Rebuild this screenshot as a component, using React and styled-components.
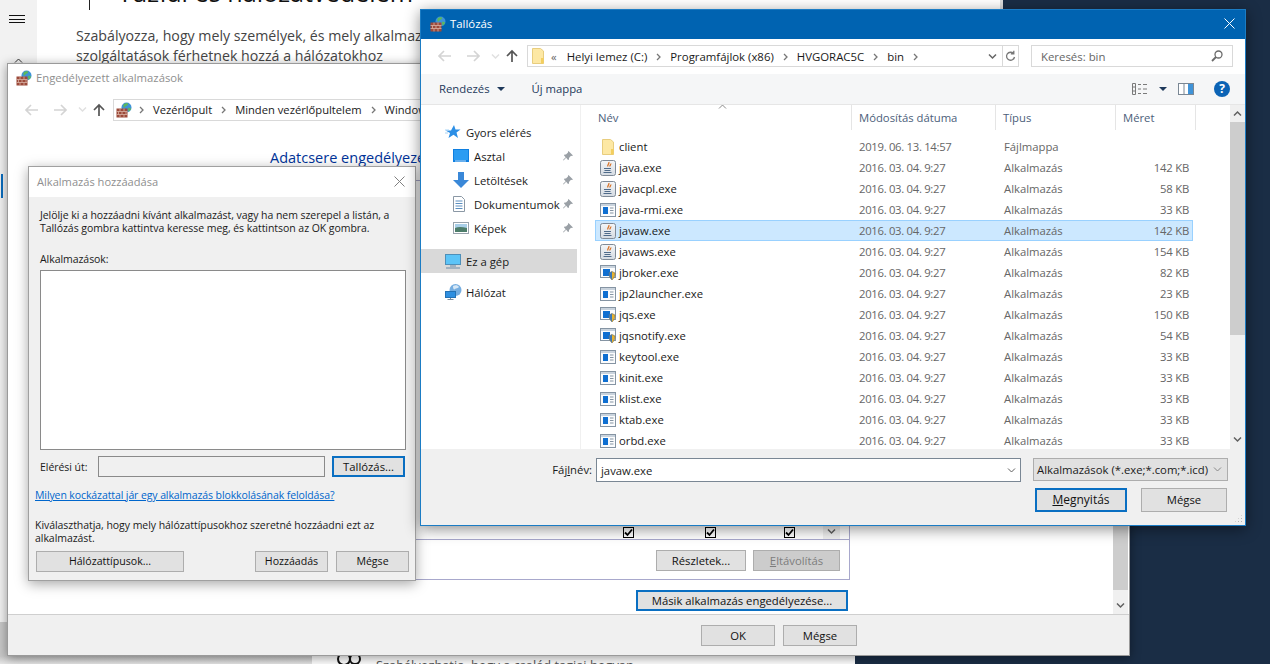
import React from "react";
import styled, { createGlobalStyle } from "styled-components";

const FONT = `"Open Sans", "Noto Sans", sans-serif`;

const files = [
  { name: "client", icon: "folder", date: "2019. 06. 13. 14:57", type: "Fájlmappa", size: "" },
  { name: "java.exe", icon: "java", size: "142 KB" },
  { name: "javacpl.exe", icon: "java", size: "58 KB" },
  { name: "java-rmi.exe", icon: "exe", size: "33 KB" },
  { name: "javaw.exe", icon: "java", size: "142 KB", selected: true },
  { name: "javaws.exe", icon: "java", size: "154 KB" },
  { name: "jbroker.exe", icon: "shield", size: "82 KB" },
  { name: "jp2launcher.exe", icon: "exe", size: "23 KB" },
  { name: "jqs.exe", icon: "shield", size: "150 KB" },
  { name: "jqsnotify.exe", icon: "shield", size: "54 KB" },
  { name: "keytool.exe", icon: "exe", size: "33 KB" },
  { name: "kinit.exe", icon: "exe", size: "33 KB" },
  { name: "klist.exe", icon: "exe", size: "33 KB" },
  { name: "ktab.exe", icon: "exe", size: "33 KB" },
  { name: "orbd.exe", icon: "exe", size: "33 KB" },
];

const FirewallIcon = () => (
  <svg width="16" height="16" viewBox="0 0 16 16">
    <circle cx="10.500" cy="5.500" r="5" fill="#3f93d8" />
    <path d="M7.500 2.500c1.500-1.500 3.500-1.500 4.500-1 .5 1.500-1 2-2 2.500s-1.500 2-2.500 1.500z" fill="#5cb85c" />
    <path d="M12 6c1.500-.5 2.500 0 3 .5-.5 2-1.500 3-2.500 3z" fill="#5cb85c" />
    <rect x="0.500" y="6.500" width="11" height="9" fill="#9c4a3a" />
    <path d="M.5 9.500h11M.5 12.500h11M4 6.500v3M8 6.500v3M2.500 9.500v3M6 9.500v3M10 9.500v3M4 12.500v3M8 12.500v3" stroke="#d9b3a5" strokeWidth="0.800" fill="none" />
  </svg>
);

const FolderIcon = () => (
  <svg width="12" height="16" viewBox="0 0 12 16">
    <path d="M.5.5h8l3 2.500v12.500H.5z" fill="#fde8a4" stroke="#e8cd7e" />
    <path d="M9 10h2.500v5.500H9z" fill="#f4cf5e" />
  </svg>
);

const JavaIcon = () => (
  <svg width="16" height="16" viewBox="0 0 16 16">
    <defs>
      <linearGradient id="javaFill" x1="0" y1="0" x2="0" y2="1">
        <stop offset="0" stopColor="#f4f6f8" />
        <stop offset="1" stopColor="#d5dbe2" />
      </linearGradient>
    </defs>
    <rect x="0.500" y="0.500" width="15" height="15" rx="2" fill="url(#javaFill)" stroke="#7f8a97" />
    <path d="M8.800 2c1 1.700-1.800 2.500-.9 4.500M10.800 3.500c.3 1-1.300 1.800-.8 3" stroke="#d9752b" strokeWidth="1.300" fill="none" />
    <path d="M4 8.500h7M4.500 10.500h6M3.500 12.500h8" stroke="#4f6b8a" strokeWidth="1" fill="none" />
  </svg>
);

const ExeIcon = () => (
  <svg width="16" height="14" viewBox="0 0 16 14">
    <rect x="0.500" y="0.500" width="15" height="13" fill="#fbfcfd" stroke="#8594a3" />
    <rect x="1" y="1" width="14" height="2" fill="#c9d3dd" />
    <rect x="3" y="4" width="5" height="7" fill="#0f6fd1" />
    <path d="M10 5h3.500M10 7.500h3.500M10 10h3.500" stroke="#8594a3" fill="none" />
  </svg>
);

const ShieldExeIcon = () => (
  <svg width="16" height="16" viewBox="0 0 16 16">
    <rect x="0.500" y="0.500" width="15" height="12" fill="#fbfcfd" stroke="#8594a3" />
    <rect x="1" y="1" width="14" height="2" fill="#c9d3dd" />
    <rect x="3" y="4" width="7" height="7" fill="#0f6fd1" />
    <path d="M9 8l3-1.500 3 1.500c0 3-1 5-3 7-2-2-3-4-3-7z" fill="#e8b32e" stroke="#6d6a55" strokeWidth="0.600" />
    <path d="M12 6.500v8.300c-2-2-3-3.800-3-6.800z" fill="#3c77b8" />
  </svg>
);

const fileIcons = {
  folder: <FolderIcon />,
  java: <JavaIcon />,
  exe: <ExeIcon />,
  shield: <ShieldExeIcon />,
};

const StarIcon = () => (
  <svg width="16" height="14" viewBox="0 0 16 14">
    <path d="M9 0l1.500 4.500H15.500l-4 3 1.500 5.500-4.500-3.200L3.500 13 5 8 .5 5.500H6z" fill="#2c8fe6" />
    <path d="M0 5h4M0 8h3" stroke="#a8d4f7" strokeWidth="1" />
  </svg>
);

const DesktopIcon = () => (
  <svg width="16" height="14" viewBox="0 0 16 14">
    <rect x="0" y="0" width="16" height="13" fill="#0f7fe0" />
    <rect x="1" y="1" width="14" height="10" fill="#2b9cf2" />
    <rect x="2" y="11.500" width="11" height="1" fill="#bfe0fa" />
  </svg>
);

const DownloadIcon = () => (
  <svg width="16" height="16" viewBox="0 0 16 16">
    <path d="M5 0h6v8h5l-8 8-8-8h5z" fill="#3a88d8" />
  </svg>
);

const DocIcon = () => (
  <svg width="12" height="16" viewBox="0 0 12 16">
    <path d="M.5.5h8l3 3v12H.5z" fill="#fff" stroke="#8b98a5" />
    <path d="M2.500 5h7M2.500 7.500h7M2.500 10h7M2.500 12.500h7" stroke="#5c8fc0" fill="none" />
  </svg>
);

const PictureIcon = () => (
  <svg width="16" height="12" viewBox="0 0 16 12">
    <rect x="0.500" y="0.500" width="15" height="11" fill="#fff" stroke="#98a3ad" />
    <rect x="2" y="2" width="12" height="4" fill="#a9cfe8" />
    <path d="M2 6c3-1.500 7-1.500 12 0v4H2z" fill="#4d7d6a" />
  </svg>
);

const PcIcon = () => (
  <svg width="16" height="15" viewBox="0 0 16 15">
    <rect x="0.500" y="0.500" width="15" height="10" fill="#5cc4f7" stroke="#4e8fb8" />
    <path d="M5 12h6M1 14h14" stroke="#8fa5b8" strokeWidth="1.400" />
  </svg>
);

const NetworkIcon = () => (
  <svg width="17" height="16" viewBox="0 0 17 16">
    <circle cx="10.500" cy="6" r="6" fill="#76aee0" />
    <path d="M8 2c2-1.500 5-1 6 1-1 1.500-3 1-4 2s-2 0-2-3z" fill="#d7e8f6" />
    <rect x="0.500" y="7.500" width="10" height="6" fill="#2e8fe0" stroke="#2472b5" />
    <path d="M5.500 14v2M2.500 15.500h6" stroke="#7f8f9f" />
  </svg>
);

const PinIcon = () => (
  <svg width="10" height="10" viewBox="0 0 10 10">
    <path d="M5.500 0l4.500 4.500-1.200.6-.8-.3L6 7 6 8.500 5 9 3.200 6.800.5 9.500 0 9l2.700-2.800L1 4.500l.5-1L3 3.500 5 1.500 5 .8z" fill="#9aa0a6" />
  </svg>
);

const ChevronSvg = ({ dir = "down", color = "#606060", w = 1.5 }) => (
  <svg width="9" height="7" viewBox="0 0 9 7">
    <path d={dir === "down" ? "M1 1.500l3.500 3.500L8 1.500" : "M1 5.500L4.500 2 8 5.500"} stroke={color} strokeWidth={w} fill="none" />
  </svg>
);

const ArrowSvg = ({ dir, color }) => {
  const paths = {
    left: "M14 7H2M7 2L2 7l5 5",
    right: "M0 7h12M7 2l5 5-5 5",
    up: "M7 13V2M2 7l5-5 5 5",
  };
  return (
    <svg width="14" height="14" viewBox="0 0 14 14">
      <path d={paths[dir]} stroke={color} strokeWidth="1.700" fill="none" />
    </svg>
  );
};

const CloseSvg = ({ color }) => (
  <svg width="11" height="11" viewBox="0 0 11 11">
    <path d="M.5.5l10 10M10.500.5l-10 10" stroke={color} strokeWidth="1" fill="none" />
  </svg>
);

const SmallArrow = () => (
  <svg width="5" height="8" viewBox="0 0 5 8">
    <path d="M1 1l3 3-3 3" stroke="#777" strokeWidth="1.300" fill="none" />
  </svg>
);

const CheckSvg = () => (
  <svg width="9" height="9" viewBox="0 0 9 9">
    <path d="M1 4.500l2.500 2.500L8 1.500" stroke="#000" strokeWidth="1.800" fill="none" />
  </svg>
);

const GlobalStyle = createGlobalStyle`
  * { box-sizing: border-box; }
  html, body { margin: 0; padding: 0; }
  body { background: #1b2d45; font-family: ${FONT}; overflow: hidden; }
  #root { width: 1270px; height: 664px; }
`;

const Desktop = styled.div`
  position: relative;
  width: 1270px;
  height: 664px;
  overflow: hidden;
  background: #1a2d45;
`;

/* legmélyebb ablak: Beállítások */
const SettingsWindow = styled.section`
  position: absolute;
  left: 0;
  top: 0;
  width: 1003px;
  height: 622px;
  display: flex;
  background: #fff;
  border-right: 3px solid #dcdcdc;
  overflow: hidden;
`;

const Rail = styled.nav`
  width: 37px;
  background: #f2f2f2;
  display: flex;
  flex-direction: column;
  align-items: flex-start;
`;

const Hamburger = styled.div`
  margin: 15px 0 0 9px;
  width: 16px;
  height: 8px;
  border-top: 1px solid #111;
  border-bottom: 1px solid #111;
  position: relative;
  &::after {
    content: "";
    position: absolute;
    left: 0;
    right: 0;
    top: 2.500px;
    height: 1px;
    background: #111;
  }
`;

const RailChevron = styled.span`
  margin: 34px 0 0 14px;
  height: 7px;
  display: flex;
`;

const RailAccent = styled.div`
  margin: 110px 0 0 1px;
  width: 2px;
  height: 24px;
  background: #0a6cbd;
`;

const SettingsBody = styled.div`
  padding-left: 39px;
  color: #333;
`;

const SettingsHeading = styled.h1`
  margin: -27px 0 0;
  display: flex;
  align-items: center;
  gap: 28px;
  font-size: 25.200px;
  font-weight: 400;
  line-height: 38px;
  color: #111;
  white-space: nowrap;
  &::before {
    content: "";
    flex: none;
    width: 1px;
    height: 36px;
    margin-left: 13px;
    background: #222;
  }
`;

const SettingsText = styled.p`
  margin: 15px 0 0;
  font-size: 14.200px;
  line-height: 20px;
  color: #444;
  white-space: nowrap;
`;

const FamilyWindow = styled.section`
  position: absolute;
  left: 312px;
  top: 622px;
  width: 543px;
  height: 42px;
  background: #fff;
  display: flex;
  align-items: flex-end;
  gap: 14px;
  padding-left: 24px;
  font-size: 12.800px;
  color: #555;
  white-space: nowrap;
  overflow: hidden;
`;

const FamilyText = styled.span`
  margin-bottom: -10px;
`;

const FamilyGlyph = styled.svg`
  margin-bottom: -7px;
`;

const LeftBackdrop = styled.div`
  position: absolute;
  left: 0;
  top: 622px;
  width: 312px;
  height: 42px;
  background: linear-gradient(#c8c8c8, #c8c8c8 34px, #e6e6e6);
`;

/* Engedélyezett alkalmazások */
const PermitWindow = styled.section`
  position: absolute;
  left: 7px;
  top: 63px;
  width: 1123px;
  height: 593px;
  display: flex;
  flex-direction: column;
  background: #fff;
  border: 1px solid #9a9a9a;
  box-shadow: 0 2px 10px rgba(0, 0, 0, 0.4);
`;

const InactiveTitle = styled.header`
  height: 29px;
  flex: none;
  display: flex;
  align-items: center;
  gap: 4px;
  padding: 0 0 2px 8px;
  font-size: 11.300px;
  color: #8f8f8f;
`;

const NavRow = styled.div`
  height: ${(p) => p.$h}px;
  flex: none;
  display: flex;
  align-items: center;
  padding: 0 0 1px ${(p) => p.$pad}px;
`;

const NavButtons = styled.div`
  display: flex;
  align-items: center;
  width: ${(p) => p.$w}px;
  flex: none;
`;

const NavSlot = styled.span`
  display: flex;
  width: ${(p) => p.$w}px;
  justify-content: center;
`;

const Breadcrumb = styled.div`
  height: 22px;
  flex: none;
  width: ${(p) => p.$w}px;
  display: flex;
  align-items: center;
  border: 1px solid #d9d9d9;
  background: #fff;
  font-size: ${(p) => p.$fs}px;
  color: #1a1a1a;
  white-space: nowrap;
  overflow: hidden;
  padding-left: ${(p) => p.$pad}px;
`;

const Crumb = styled.span`
  margin: 0 ${(p) => p.$r || 9}px 0 ${(p) => p.$l || 9}px;
  color: #666;
`;

const CrumbEnd = styled.span`
  margin-left: auto;
  height: 100%;
  display: flex;
  align-items: center;
`;

const RefreshBox = styled.span`
  width: 16px;
  height: 100%;
  margin-left: 5px;
  border-left: 1px solid #d9d9d9;
  display: flex;
  align-items: center;
  justify-content: center;
`;

const PermitContent = styled.div`
  flex: 1;
  min-height: 0;
  display: flex;
`;

const PermitMain = styled.div`
  flex: 1;
  padding: 20px 263px 0 42px;
`;

const PermitHeading = styled.h2`
  margin: 0 0 0 220px;
  font-size: 14.500px;
  line-height: 22px;
  font-weight: 400;
  color: #003399;
  white-space: nowrap;
`;

const GroupBox = styled.div`
  margin-top: 11px;
  height: 400px;
  display: flex;
  flex-direction: column;
  border: 1px solid #a8a8cc;
  padding: 0 9px 8px 0;
`;

const AppTable = styled.div`
  flex: 1;
  display: flex;
  align-items: flex-end;
  justify-content: flex-end;
  border-bottom: 1px solid #a8a8cc;
  margin-right: -9px;
`;

const CheckCell = styled.span`
  width: 11px;
  height: 11px;
  margin-left: ${(p) => p.$gap}px;
  margin-bottom: 1px;
  border: 1px solid #000;
  background: #fff;
  display: flex;
  align-items: center;
  justify-content: center;
`;

const TableScroll = styled.span`
  width: 17px;
  height: 16px;
  margin-left: 28px;
  margin-right: 9px;
  background: #f0f0f0;
  display: flex;
  align-items: center;
  justify-content: center;
`;

const ButtonRow = styled.div`
  margin-top: ${(p) => p.$top || 0}px;
  padding-right: ${(p) => p.$right || 0}px;
  display: flex;
  justify-content: flex-end;
  gap: ${(p) => p.$gap || 0}px;
`;

const Button = styled.button`
  width: ${(p) => p.$w}px;
  height: ${(p) => p.$h || 21}px;
  padding: 0;
  background: ${(p) => (p.disabled ? "#cccccc" : "#e1e1e1")};
  border: ${(p) => (p.$focus ? "2px solid #0a6fc2" : "1px solid #adadad")};
  color: ${(p) => (p.disabled ? "#7d7d7d" : "#111")};
  font-family: ${FONT};
  font-size: ${(p) => p.$fs || 11.3}px;
  line-height: 1;
  white-space: nowrap;
`;

const PageScroll = styled.div`
  width: 15px;
  flex: none;
  margin-right: 1px;
  display: flex;
  flex-direction: column;
  justify-content: space-between;
  align-items: center;
  background: #f0f0f0;
  padding-bottom: 5px;
`;

const ScrollThumb = styled.div`
  width: 100%;
  height: ${(p) => p.$h}px;
  flex: none;
  background: #cdcdcd;
`;

const PermitFooter = styled.footer`
  height: 41px;
  flex: none;
  display: flex;
  justify-content: flex-end;
  gap: 8px;
  padding: 10px 272px 0 0;
  background: #f0f0f0;
  border-top: 1px solid #cfcfcf;
`;

/* Alkalmazás hozzáadása */
const AddDialog = styled.section`
  position: absolute;
  left: 28px;
  top: 166px;
  width: 388px;
  height: 415px;
  display: flex;
  flex-direction: column;
  background: #f0f0f0;
  border: 1px solid #a0a0a0;
  box-shadow: 0 3px 12px rgba(0, 0, 0, 0.35);
`;

const DialogTitle = styled.header`
  height: 30px;
  flex: none;
  display: flex;
  align-items: center;
  justify-content: space-between;
  padding: 0 10px 2px 8px;
  background: #fff;
  font-size: 11.100px;
  color: #8f8f8f;
`;

const DialogBody = styled.div`
  flex: 1;
  padding: 12px 0 0 11px;
  display: flex;
  flex-direction: column;
  align-items: flex-start;
  font-size: 10.500px;
  letter-spacing: -0.050px;
  color: #1a1a1a;
`;

const DialogText = styled.p`
  margin: ${(p) => p.$top || 0}px 0 0 ${(p) => p.$left || 0}px;
  line-height: 13px;
  white-space: nowrap;
`;

const DialogLabel = styled.label`
  margin-top: 17px;
  line-height: 14px;
`;

const AppsList = styled.div`
  margin-top: 4px;
  width: 366px;
  height: 180px;
  background: #fff;
  border: 1px solid #8a8a8a;
`;

const PathRow = styled.div`
  margin-top: 6px;
  width: 366px;
  display: flex;
  align-items: center;
  gap: 7px;
`;

const PathLabel = styled.span`
  width: 51px;
  flex: none;
  white-space: nowrap;
`;

const PathInput = styled.div`
  width: 227px;
  height: 21px;
  background: #f0f0f0;
  border: 1px solid #8a8a8a;
`;

const DialogLink = styled.a`
  margin: 11px 0 0 -5px;
  line-height: 14px;
  letter-spacing: -0.100px;
  color: #0066cc;
  text-decoration: underline;
  white-space: nowrap;
`;

const DialogButtons = styled.div`
  margin: 6px 0 0 -4px;
  width: 373px;
  display: flex;
  gap: 8px;
  & > :first-child {
    margin-right: auto;
  }
`;

/* Tallózás */
const BrowseWindow = styled.section`
  position: absolute;
  left: 420px;
  top: 9px;
  width: 826px;
  height: 517px;
  display: flex;
  flex-direction: column;
  background: #fff;
  border: 1px solid #1b7cc4;
  box-shadow: 0 3px 14px rgba(0, 0, 0, 0.45);
`;

const BrowseTitle = styled.header`
  height: 29px;
  flex: none;
  display: flex;
  align-items: center;
  gap: 4px;
  padding: 0 10px 2px 9px;
  background: #0063b1;
  color: #fff;
  font-size: 11.400px;
`;

const TitleClose = styled.span`
  margin-left: auto;
  display: flex;
`;

const SearchBox = styled.div`
  width: 202px;
  height: 22px;
  margin-left: 12px;
  flex: none;
  display: flex;
  align-items: center;
  justify-content: space-between;
  padding: 0 9px;
  border: 1px solid #d9d9d9;
  font-size: 11.400px;
  color: #666;
`;

const Toolbar = styled.div`
  height: 31px;
  flex: none;
  display: flex;
  align-items: center;
  padding: 0 15px 1px 18px;
  background: #f5f6f7;
  border-bottom: 1px solid #e6e6e6;
  font-size: 11.300px;
  color: #1e395b;
`;

const ToolButton = styled.span`
  display: flex;
  align-items: center;
  gap: 7px;
  margin-right: ${(p) => p.$right || 0}px;
`;

const DownTriangle = styled.i`
  width: 0;
  height: 0;
  border-left: 4px solid transparent;
  border-right: 4px solid transparent;
  border-top: 4px solid #1e395b;
`;

const ToolIcons = styled.span`
  margin-left: auto;
  display: flex;
  align-items: center;
`;

const HelpBadge = styled.span`
  width: 16px;
  height: 16px;
  margin-left: 20px;
  border-radius: 50%;
  background: #0b63b5;
  color: #fff;
  font-size: 12px;
  font-weight: 700;
  line-height: 16px;
  text-align: center;
`;

const BrowseMain = styled.div`
  flex: 1;
  min-height: 0;
  display: flex;
`;

const NavPane = styled.aside`
  width: 160px;
  flex: none;
  padding-top: 15px;
  border-right: 1px solid #f0f0f0;
  font-size: 11.300px;
  color: #1a1a1a;
`;

const NavItem = styled.div`
  height: 24px;
  width: 156px;
  margin-top: ${(p) => p.$top || 0}px;
  display: flex;
  align-items: center;
  padding-left: ${(p) => (p.$sub ? 32 : 24)}px;
  background: ${(p) => (p.$active ? "#d9d9d9" : "transparent")};
  white-space: nowrap;
`;

const NavIconSlot = styled.span`
  width: 21px;
  flex: none;
  display: flex;
  align-items: center;
`;

const NavPin = styled.span`
  margin-left: auto;
  margin-right: 4px;
  display: flex;
`;

const ListPane = styled.div`
  flex: 1;
  min-width: 0;
  overflow: hidden;
`;

const ListHeader = styled.div`
  height: 25px;
  margin-bottom: 6px;
  display: grid;
  grid-template-columns: 271px 144px 120px 80px;
  font-size: 11.300px;
  color: #4c607a;
`;

const HeaderCell = styled.div`
  position: relative;
  padding: 5px 0 0 ${(p) => p.$pad}px;
  border-right: 1px solid #e5e5e5;
`;

const SortMark = styled.span`
  position: absolute;
  left: 137px;
  top: -2px;
  display: flex;
`;

const FileRow = styled.div`
  width: 598px;
  height: 21px;
  margin-left: 14px;
  display: grid;
  grid-template-columns: 257px 144px 120px 75px;
  align-items: center;
  border: 1px solid ${(p) => (p.$selected ? "#99d1ff" : "transparent")};
  background: ${(p) => (p.$selected ? "#cce8ff" : "transparent")};
  font-size: 11.300px;
  color: #666;
  white-space: nowrap;
`;

const FileName = styled.span`
  display: flex;
  align-items: center;
  gap: 3px;
  padding-left: 4px;
  color: #1a1a1a;
`;

const FileIconSlot = styled.span`
  width: 16px;
  height: 16px;
  display: flex;
  align-items: center;
  justify-content: center;
`;

const FileDate = styled.span`
  padding-left: 6px;
  letter-spacing: -0.300px;
`;

const FileCell = styled.span`
  padding-left: 7px;
`;

const FileSize = styled.span`
  text-align: right;
  padding-right: 3px;
  letter-spacing: -0.200px;
`;

const BrowseScroll = styled.div`
  width: 15px;
  flex: none;
  display: flex;
  flex-direction: column;
  align-items: center;
  background: #f0f0f0;
`;

const ScrollCap = styled.span`
  height: ${(p) => p.$h}px;
  flex: none;
  display: flex;
  align-items: ${(p) => (p.$end ? "flex-end" : "center")};
  padding-bottom: ${(p) => (p.$end ? 6 : 0)}px;
`;

const BrowseBottom = styled.div`
  height: 76px;
  flex: none;
  position: relative;
  background: #f0f0f0;
  padding: 9px 17px 0 0;
  font-size: 11.300px;
  color: #1a1a1a;
`;

const BottomRow = styled.div`
  display: flex;
  justify-content: flex-end;
  align-items: flex-start;
`;

const NameLabel = styled.label`
  margin: 4px 4px 0 0;
`;

const NameInput = styled.div`
  width: 425px;
  height: 24px;
  display: flex;
  align-items: center;
  justify-content: space-between;
  padding: 0 4px;
  background: #fff;
  border: 1px solid #7a8794;
`;

const TypeSelect = styled.div`
  width: 195px;
  height: 23px;
  margin-left: 12px;
  display: flex;
  align-items: center;
  justify-content: space-between;
  padding: 0 5px 0 3px;
  background: #e1e1e1;
  border: 1px solid #adadad;
  white-space: nowrap;
`;

const BrowseButtons = styled.div`
  margin: 6px 1px 0 0;
  display: flex;
  justify-content: flex-end;
  gap: 14px;
`;

const Grip = styled.span`
  position: absolute;
  right: 2px;
  bottom: 2px;
  width: 9px;
  height: 9px;
  background-image: radial-gradient(#b5b5b5 1px, transparent 1px);
  background-size: 3px 3px;
  clip-path: polygon(100% 0, 100% 100%, 0 100%);
`;

const ViewIcon = () => (
  <svg width="16" height="12" viewBox="0 0 16 12">
    <path d="M.5.5h3v11h-3zM.5 4h3M.5 8h3M6 1.500h3M11 1.500h4M6 6h3M11 6h4M6 10.500h3M11 10.500h4" stroke="#7a7a7a" fill="none" />
  </svg>
);

const PaneIcon = () => (
  <svg width="16" height="12" viewBox="0 0 16 12">
    <rect x="0.500" y="0.500" width="15" height="11" fill="#fff" stroke="#7a8794" />
    <rect x="10" y="1" width="5" height="10" fill="#3f93d8" />
    <path d="M6 1v10" stroke="#7a8794" />
  </svg>
);

const SearchGlyph = () => (
  <svg width="12" height="12" viewBox="0 0 12 12">
    <circle cx="7.500" cy="4.500" r="3.500" stroke="#6a6a6a" strokeWidth="1.300" fill="none" />
    <path d="M5 7l-4 4" stroke="#6a6a6a" strokeWidth="1.800" />
  </svg>
);

const RefreshGlyph = () => (
  <svg width="11" height="12" viewBox="0 0 11 12">
    <path d="M8.500 3.500A4 4 0 1 0 9.500 7M8.800 .8v3H5.800" stroke="#777" strokeWidth="1.300" fill="none" />
  </svg>
);

const FamilySvg = () => (
  <FamilyGlyph width="26" height="20" viewBox="0 0 26 20">
    <circle cx="8" cy="8" r="6" stroke="#111" strokeWidth="2" fill="none" />
    <circle cx="19" cy="8" r="5" stroke="#111" strokeWidth="2" fill="none" />
    <circle cx="13" cy="2" r="1.500" fill="#111" />
  </FamilyGlyph>
);

const BackForward = ({ up = "#555" }) => (
  <>
    <NavSlot $w={30}>
      <ArrowSvg dir="left" color="#d4d4d4" />
    </NavSlot>
    <NavSlot $w={30}>
      <ArrowSvg dir="right" color="#d4d4d4" />
    </NavSlot>
    <NavSlot $w={12}>
      <ChevronSvg color="#e0e0e0" />
    </NavSlot>
    <NavSlot $w={22}>
      <ArrowSvg dir="up" color={up} />
    </NavSlot>
  </>
);

export default function App() {
  return (
    <Desktop>
      <GlobalStyle />

      <SettingsWindow>
        <Rail>
          <Hamburger />
          <RailChevron><ChevronSvg dir="up" color="#333" w={1} /></RailChevron>
          <RailAccent />
        </Rail>
        <SettingsBody>
          <SettingsHeading>Tűzfal és hálózatvédelem</SettingsHeading>
          <SettingsText>
            Szabályozza, hogy mely személyek, és mely alkalmazások és
            <br />
            szolgáltatások férhetnek hozzá a hálózatokhoz
          </SettingsText>
        </SettingsBody>
      </SettingsWindow>

      <LeftBackdrop />
      <FamilyWindow>
        <FamilySvg />
        <FamilyText>Szabályozhatja, hogy a család tagjai hogyan</FamilyText>
      </FamilyWindow>

      <PermitWindow>
        <InactiveTitle>
          <FirewallIcon />
          Engedélyezett alkalmazások
        </InactiveTitle>
        <NavRow $h={34} $pad={8}>
          <NavButtons $w={97}>
            <BackForward />
          </NavButtons>
          <Breadcrumb $w={980} $fs={11.2} $pad={2}>
            <FirewallIcon />
            <Crumb $l={7} $r={9}><SmallArrow /></Crumb>
            Vezérlőpult
            <Crumb><SmallArrow /></Crumb>
            Minden vezérlőpultelem
            <Crumb><SmallArrow /></Crumb>
            Windows Defender tűzfal
          </Breadcrumb>
        </NavRow>
        <PermitContent>
          <PermitMain>
            <PermitHeading>Adatcsere engedélyezése az alkalmazások számára</PermitHeading>
            <GroupBox>
              <AppTable>
                <CheckCell $gap={0}><CheckSvg /></CheckCell>
                <CheckCell $gap={71}><CheckSvg /></CheckCell>
                <CheckCell $gap={68}><CheckSvg /></CheckCell>
                <TableScroll><ChevronSvg /></TableScroll>
              </AppTable>
              <ButtonRow $top={10} $gap={7}>
                <Button $w={90}>Részletek...</Button>
                <Button $w={87} disabled><u>E</u>ltávolítás</Button>
              </ButtonRow>
            </GroupBox>
            <ButtonRow $top={10} $right={2}>
              <Button $w={212} $focus>Másik alkalmazás engedélyezése...</Button>
            </ButtonRow>
          </PermitMain>
          <PageScroll>
            <ScrollThumb $h={463} />
            <ChevronSvg />
          </PageScroll>
        </PermitContent>
        <PermitFooter>
          <Button $w={74}>OK</Button>
          <Button $w={74}>Mégse</Button>
        </PermitFooter>
      </PermitWindow>

      <AddDialog>
        <DialogTitle>
          Alkalmazás hozzáadása
          <CloseSvg color="#808080" />
        </DialogTitle>
        <DialogBody>
          <DialogText>
            Jelölje ki a hozzáadni kívánt alkalmazást, vagy ha nem szerepel a listán, a
            <br />
            Tallózás gombra kattintva keresse meg, és kattintson az OK gombra.
          </DialogText>
          <DialogLabel>Alkalmazások:</DialogLabel>
          <AppsList />
          <PathRow>
            <PathLabel>Elérési út:</PathLabel>
            <PathInput />
            <Button $w={73} $h={21} $focus>Tallózás...</Button>
          </PathRow>
          <DialogLink>Milyen kockázattal jár egy alkalmazás blokkolásának feloldása?</DialogLink>
          <DialogText $top={17} $left={-5}>
            Kiválaszthatja, hogy mely hálózattípusokhoz szeretné hozzáadni ezt az
            <br />
            alkalmazást.
          </DialogText>
          <DialogButtons>
            <Button $w={148} $fs={10.6}>Hálózattípusok...</Button>
            <Button $w={73} $fs={10.6}>Hozzáadás</Button>
            <Button $w={73} $fs={10.6}>Mégse</Button>
          </DialogButtons>
        </DialogBody>
      </AddDialog>

      <BrowseWindow>
        <BrowseTitle>
          <FirewallIcon />
          Tallózás
          <TitleClose><CloseSvg color="#fff" /></TitleClose>
        </BrowseTitle>
        <NavRow $h={35} $pad={8}>
          <NavButtons $w={98}>
            <BackForward />
          </NavButtons>
          <Breadcrumb $w={492} $fs={11.4} $pad={4}>
            <FolderIcon />
            <Crumb $l={7} $r={10}>«</Crumb>
            Helyi lemez (C:)
            <Crumb><SmallArrow /></Crumb>
            Programfájlok (x86)
            <Crumb><SmallArrow /></Crumb>
            HVGORAC5C
            <Crumb><SmallArrow /></Crumb>
            bin
            <Crumb><SmallArrow /></Crumb>
            <CrumbEnd>
              <ChevronSvg color="#666" />
              <RefreshBox><RefreshGlyph /></RefreshBox>
            </CrumbEnd>
          </Breadcrumb>
          <SearchBox>
            Keresés: bin
            <SearchGlyph />
          </SearchBox>
        </NavRow>
        <Toolbar>
          <ToolButton $right={27}>Rendezés <DownTriangle /></ToolButton>
          <ToolButton>Új mappa</ToolButton>
          <ToolIcons>
            <ViewIcon />
            <NavSlot $w={30}><DownTriangle /></NavSlot>
            <PaneIcon />
            <HelpBadge>?</HelpBadge>
          </ToolIcons>
        </Toolbar>
        <BrowseMain>
          <NavPane>
            <NavItem><NavIconSlot><StarIcon /></NavIconSlot>Gyors elérés</NavItem>
            <NavItem $sub><NavIconSlot><DesktopIcon /></NavIconSlot>Asztal<NavPin><PinIcon /></NavPin></NavItem>
            <NavItem $sub><NavIconSlot><DownloadIcon /></NavIconSlot>Letöltések<NavPin><PinIcon /></NavPin></NavItem>
            <NavItem $sub><NavIconSlot><DocIcon /></NavIconSlot>Dokumentumok<NavPin><PinIcon /></NavPin></NavItem>
            <NavItem $sub><NavIconSlot><PictureIcon /></NavIconSlot>Képek<NavPin><PinIcon /></NavPin></NavItem>
            <NavItem $active $top={9}><NavIconSlot><PcIcon /></NavIconSlot>Ez a gép</NavItem>
            <NavItem $top={7}><NavIconSlot><NetworkIcon /></NavIconSlot>Hálózat</NavItem>
          </NavPane>
          <ListPane>
            <ListHeader>
              <HeaderCell $pad={17}>
                Név
                <SortMark><ChevronSvg color="#8a8a8a" dir="up" w={1} /></SortMark>
              </HeaderCell>
              <HeaderCell $pad={7}>Módosítás dátuma</HeaderCell>
              <HeaderCell $pad={7}>Típus</HeaderCell>
              <HeaderCell $pad={7}>Méret</HeaderCell>
            </ListHeader>
            {files.map((f) => (
              <FileRow key={f.name} $selected={f.selected}>
                <FileName>
                  <FileIconSlot>{fileIcons[f.icon]}</FileIconSlot>
                  {f.name}
                </FileName>
                <FileDate>{f.date || "2016. 03. 04. 9:27"}</FileDate>
                <FileCell>{f.type || "Alkalmazás"}</FileCell>
                <FileSize>{f.size}</FileSize>
              </FileRow>
            ))}
          </ListPane>
          <BrowseScroll>
            <ScrollCap $h={17}><ChevronSvg dir="up" /></ScrollCap>
            <ScrollThumb $h={213} />
            <ScrollCap $h={114} $end><ChevronSvg /></ScrollCap>
          </BrowseScroll>
        </BrowseMain>
        <BrowseBottom>
          <BottomRow>
            <NameLabel>Fáj<u>l</u>név:</NameLabel>
            <NameInput>
              javaw.exe
              <ChevronSvg w={1} />
            </NameInput>
            <TypeSelect>
              Alkalmazások (*.exe;*.com;*.icd)
              <ChevronSvg w={1} color="#888" />
            </TypeSelect>
          </BottomRow>
          <BrowseButtons>
            <Button $w={92} $h={24} $focus $fs={12}><u>M</u>egnyitás</Button>
            <Button $w={86} $h={24}>Mégse</Button>
          </BrowseButtons>
          <Grip />
        </BrowseBottom>
      </BrowseWindow>
    </Desktop>
  );
}
